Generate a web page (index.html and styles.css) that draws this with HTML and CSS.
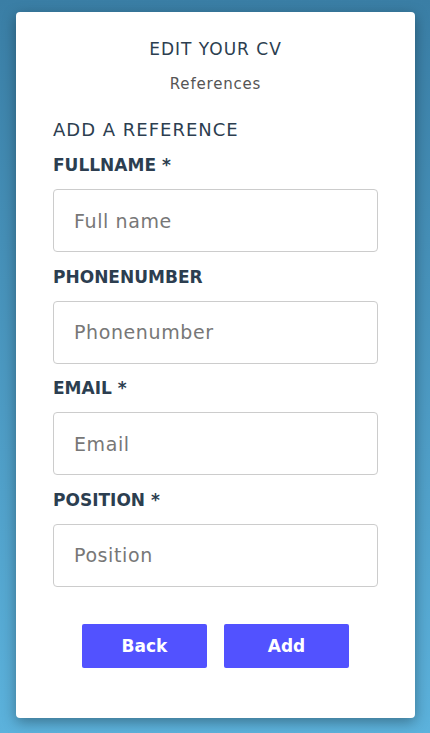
FILE: index.html
```html
<!DOCTYPE html>
<html lang="en">
<head>
  <meta charset="UTF-8" />
  <meta name="viewport" content="width=device-width, initial-scale=1.0" />
  <title>Edit your CV</title>
  <link rel="stylesheet" href="styles.css">
</head>
<body>
  <div class="card">
    <h2>EDIT YOUR CV</h2>
    <p class="subtitle">References</p>
    <h3>ADD A REFERENCE</h3>
    <form class="form">
      <label>FULLNAME *</label>
      <input type="text" placeholder="Full name">
      <label>PHONENUMBER</label>
      <input type="text" placeholder="Phonenumber">
      <label>EMAIL *</label>
      <input type="text" placeholder="Email">
      <label>POSITION *</label>
      <input type="text" placeholder="Position">
      <div class="actions">
        <button type="button">Back</button>
        <button type="button">Add</button>
      </div>
    </form>
  </div>
</body>
</html>
```

FILE: styles.css
```css
html {
  background: linear-gradient(to bottom, #3a7ea5, #5cb2dc);
  min-height: 100%;
}
body {
  font-family: 'DejaVu Sans', sans-serif;
  color: #2c3e50;
  margin: 0;
  padding: 12px 15px 15px 16px;
}
.card {
  background: white;
  border-radius: 4px;
  box-shadow: 0 4px 14px rgba(0, 0, 0, 0.35);
  padding: 27px 37px 50px;
  height: 706px;
  box-sizing: border-box;
}
h2 {
  text-align: center;
  font-size: 17px;
  font-weight: 500;
  letter-spacing: 1px;
  margin: 0;
}
.subtitle {
  text-align: center;
  font-size: 15px;
  color: #555;
  letter-spacing: 0.8px;
  margin: 16px 0 0;
}
h3 {
  font-size: 18px;
  font-weight: 500;
  letter-spacing: 1px;
  margin: 26px 0 0;
}
.form {
  display: flex;
  flex-direction: column;
}
label {
  font-size: 17px;
  font-weight: 600;
  margin-top: 15px;
  margin-bottom: 14px;
}
label:not(:first-child) {
  margin-top: 14.5px;
}
input {
  height: 63px;
  box-sizing: border-box;
  border: 1px solid #ccc;
  border-radius: 4px;
  padding: 0 20px;
  font-family: inherit;
  font-size: 19px;
  letter-spacing: 0.6px;
  color: #333;
}
input::placeholder {
  color: #777;
}
.actions {
  display: flex;
  justify-content: center;
  gap: 17px;
  margin-top: 37px;
}
button {
  width: 125px;
  height: 44px;
  border: none;
  border-radius: 2px;
  background-color: #5252ff;
  color: white;
  font-family: inherit;
  font-weight: bold;
  font-size: 17px;
}
```
